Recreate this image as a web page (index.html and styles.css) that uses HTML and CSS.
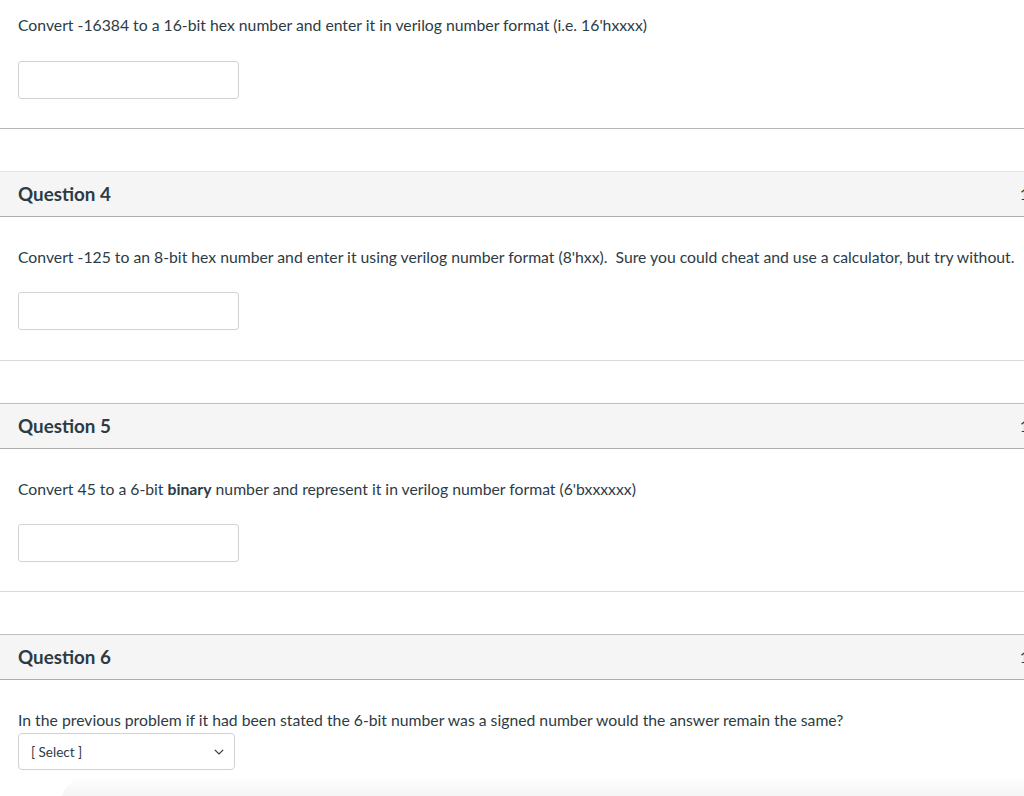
FILE: index.html
```html
<!DOCTYPE html>
<html>
<head>
<meta charset="utf-8">
<link rel="stylesheet" href="styles.css">
</head>
<body>
<div class="page">
  <div class="q-body first">
    <p class="q-text">Convert -16384 to a 16-bit hex number and enter it in verilog number format (i.e. 16'hxxxx)</p>
    <div class="answer"></div>
  </div>
  <hr class="sep dark">

  <div class="q-header light-top"><span class="q-name">Question 4</span><span class="q-pts">1 pts</span></div>
  <div class="q-body">
    <p class="q-text">Convert -125 to an 8-bit hex number and enter it using verilog number format (8'hxx).&nbsp; Sure you could cheat and use a calculator, but try without.</p>
    <div class="answer"></div>
  </div>
  <hr class="sep">

  <div class="q-header"><span class="q-name">Question 5</span><span class="q-pts">1 pts</span></div>
  <div class="q-body">
    <p class="q-text">Convert 45 to a 6-bit <strong>binary</strong> number and represent it in verilog number format (6'bxxxxxx)</p>
    <div class="answer"></div>
  </div>
  <hr class="sep last">

  <div class="q-header"><span class="q-name">Question 6</span><span class="q-pts">1 pts</span></div>
  <div class="q-body">
    <p class="q-text tight">In the previous problem if it had been stated the 6-bit number was a signed number would the answer remain the same?</p>
    <div class="select"><span>[ Select ]</span>
      <svg class="chev" width="10" height="6" viewBox="0 0 10 6"><path d="M0.8 0.8 L5 5 L9.2 0.8" fill="none" stroke="#2d3b45" stroke-width="1.2"/></svg>
    </div>
  </div>
  <div class="footer-shadow"></div>
</div>
</body>
</html>
```

FILE: styles.css
```css
html, body {
  margin: 0;
  padding: 0;
  background: #fff;
  overflow: hidden;
}
body {
  font-family: Lato, "Open Sans", sans-serif;
  color: #2d3b45;
  font-size: 15.75px;
}
.page {
  width: 1072px;
}
.q-body {
  padding: 0 18px;
}
.q-body.first .q-text {
  margin-top: 15px;
}
.q-text {
  margin: 30px 0 0 0;
  line-height: 20px;
  white-space: nowrap;
}
.q-text strong {
  font-weight: 700;
}
.answer {
  margin-top: 25px;
  width: 219px;
  height: 36px;
  border: 1px solid #d0d3d6;
  border-radius: 3px;
}
.first .answer {
  margin-top: 26px;
}
.sep {
  margin: 30px 0 0 0;
  border: 0;
  border-top: 1px solid #dadada;
  height: 0;
}
.sep.dark {
  margin-top: 29px;
  border-top-color: #b5b5b5;
}
.sep.last {
  margin-top: 29px;
}
.q-header {
  margin-top: 42px;
  box-sizing: content-box;
  background: #f5f5f5;
  border-top: 1px solid #bdbdbd;
  border-bottom: 1px solid #adadad;
  display: flex;
  align-items: center;
  padding: 0 18px 2px 18px;
  height: 42px;
}
.q-header.light-top {
  border-top-color: #e6e6e6;
}
.q-name {
  font-weight: 700;
  font-size: 18.8px;
}
.q-pts {
  margin-left: auto;
  font-size: 15.75px;
}
.q-text.tight {
  margin-top: 30px;
}
.select {
  margin-top: 3px;
  border: 1px solid #d0d3d6;
  border-radius: 4px;
  display: flex;
  align-items: center;
  box-sizing: border-box;
  width: 217px;
  height: 37px;
  padding: 0 10px 0 12px;
  font-size: 13.5px;
}
.select .chev {
  margin-left: auto;
}
.footer-shadow {
  margin: 6px 0 0 60px;
  height: 30px;
  background: linear-gradient(to bottom, rgba(245,245,245,0) 0%, rgba(240,240,240,1) 100%);
  border-radius: 40px 0 0 0;
}
```
